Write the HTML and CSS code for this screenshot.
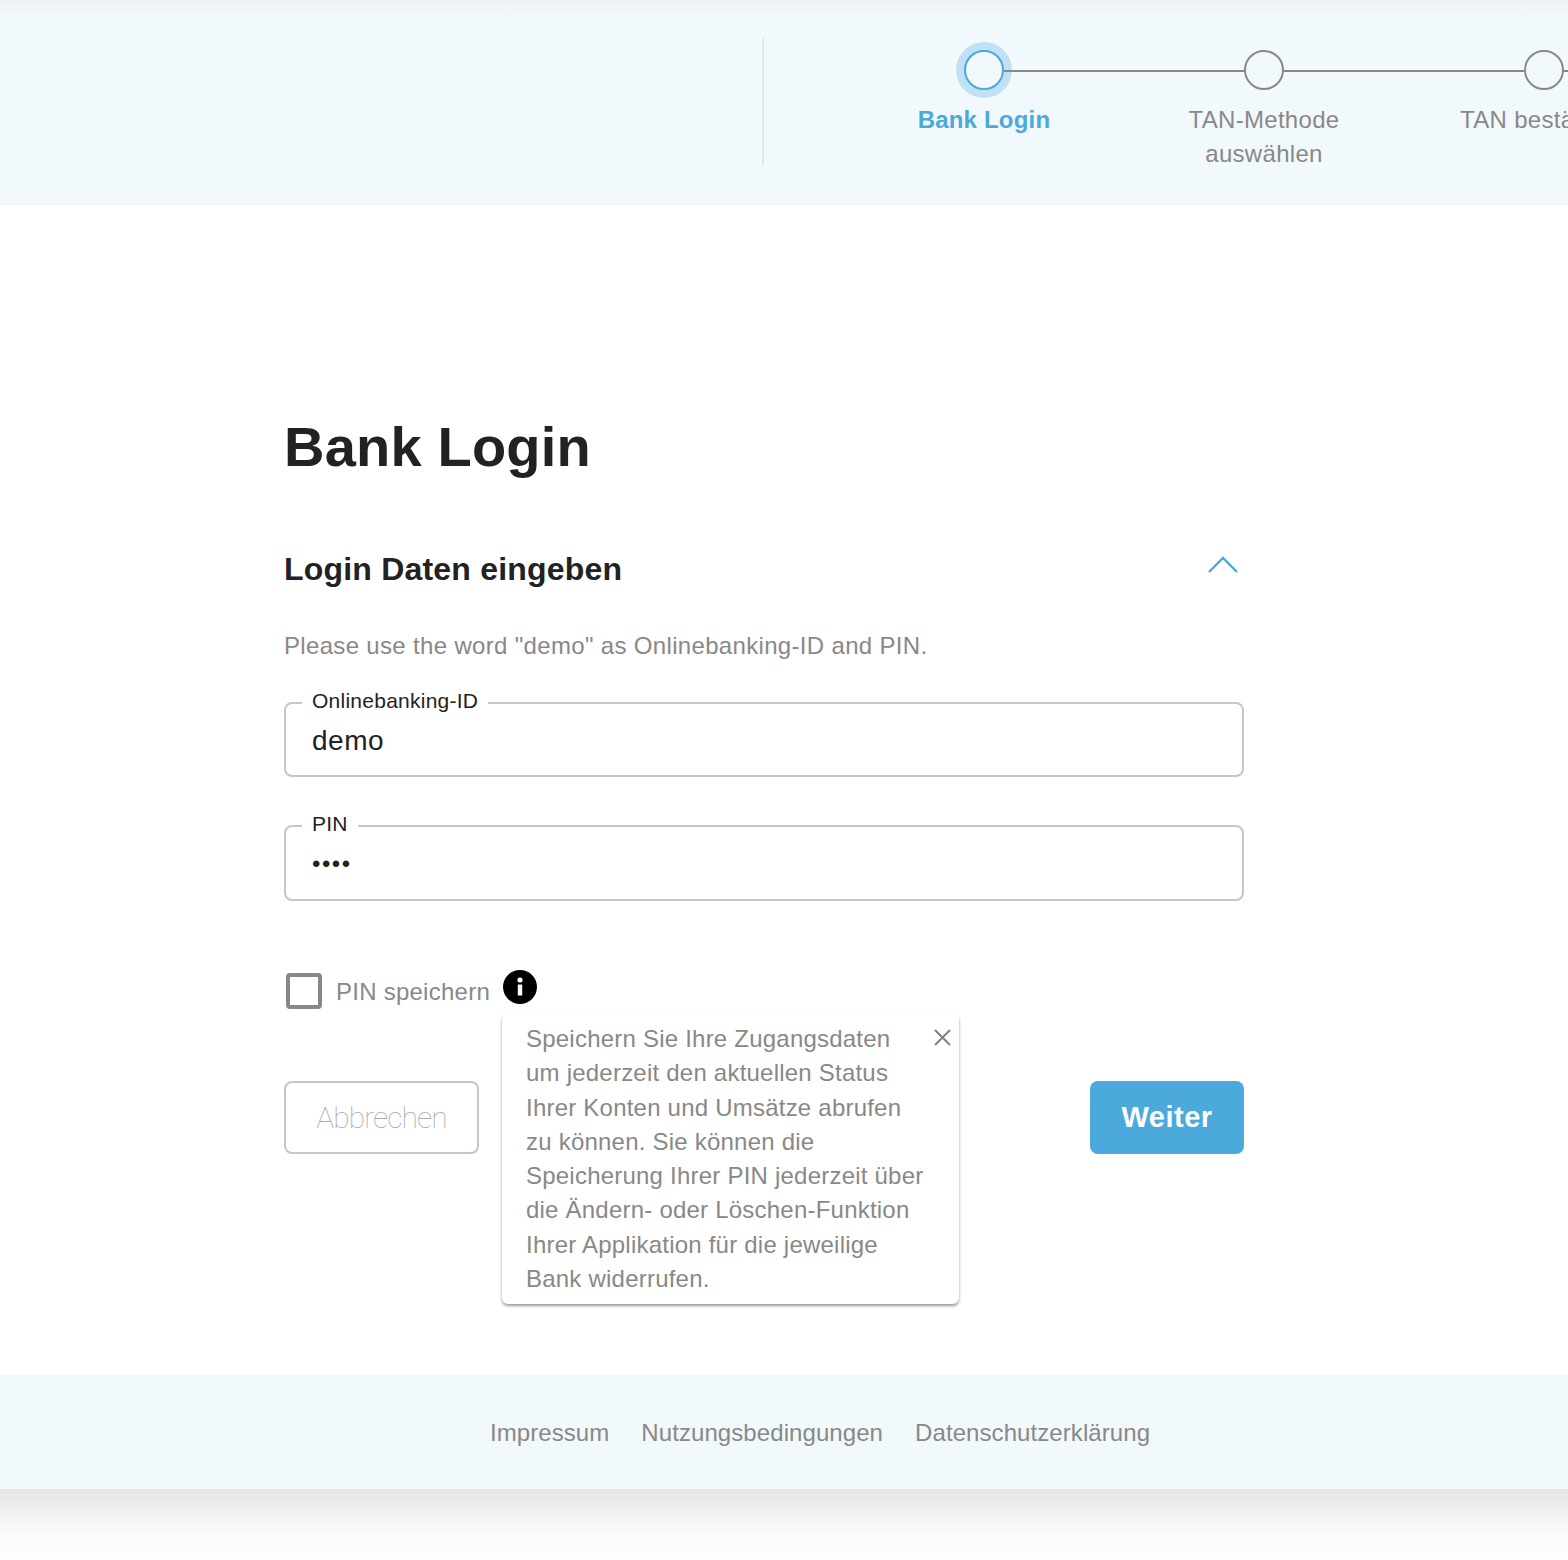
FILE: index.html
```html
<!DOCTYPE html>
<html lang="de">
<head>
  <meta charset="UTF-8">
  <meta name="viewport" content="width=device-width, initial-scale=1.0">
  <title>Bank Login</title>
  <link rel="stylesheet" href="styles.css">
</head>
<body>
  <header class="topbar">
    <div class="topbar-left"></div>
    <ol class="stepper">
      <li class="step step-active"><span class="step-dot"></span><span class="step-label">Bank Login</span></li>
      <li class="step"><span class="step-dot"></span><span class="step-label">TAN-Methode auswählen</span></li>
      <li class="step"><span class="step-dot"></span><span class="step-label">TAN bestätigen</span></li>
    </ol>
  </header>

  <main class="content">
    <h1>Bank Login</h1>
    <div class="section-head">
      <h2>Login Daten eingeben</h2>
      <svg class="chevron" width="30" height="17" viewBox="0 0 30 17" fill="none" stroke="#4ba9dc" stroke-width="2.4"><path d="M1 16 L15 2 L29 16"/></svg>
    </div>
    <p class="hint">Please use the word "demo" as Onlinebanking-ID and PIN.</p>

    <form>
      <fieldset class="field">
        <legend>Onlinebanking-ID</legend>
        <input type="text" value="demo">
      </fieldset>
      <fieldset class="field field-pin">
        <legend>PIN</legend>
        <input type="password" value="demo">
      </fieldset>

      <div class="save-row">
        <span class="checkbox"></span>
        <span class="save-label">PIN speichern</span>
        <svg class="info" width="34" height="34" viewBox="0 0 34 34"><circle cx="17" cy="17" r="17" fill="#000"/><rect x="14.8" y="14.5" width="4.4" height="11" fill="#fff"/><circle cx="17" cy="10" r="2.6" fill="#fff"/></svg>
        <div class="tooltip">
          <p>Speichern Sie Ihre Zugangsdaten um jederzeit den aktuellen Status Ihrer Konten und Umsätze abrufen zu können. Sie können die Speicherung Ihrer PIN jederzeit über die Ändern- oder Löschen-Funktion Ihrer Applikation für die jeweilige Bank widerrufen.</p>
          <svg class="tooltip-close" width="17" height="17" viewBox="0 0 17 17" stroke="#808080" stroke-width="2"><path d="M1 1 L16 16 M16 1 L1 16"/></svg>
        </div>
      </div>

      <div class="actions">
        <button type="button" class="btn-cancel">Abbrechen</button>
        <button type="submit" class="btn-next">Weiter</button>
      </div>
    </form>
  </main>

  <footer class="footer">
    <a href="#">Impressum</a>
    <a href="#">Nutzungsbedingungen</a>
    <a href="#">Datenschutzerklärung</a>
  </footer>
  <div class="bottom-shade"></div>
</body>
</html>
```

FILE: styles.css
```css
* { box-sizing: border-box; }
html, body {
  overflow-x: hidden;
}
body {
  margin: 0;
  font-family: 'Liberation Sans', Arial, sans-serif;
  background: #fff;
  color: #222;
}
.topbar {
  height: 205px;
  display: flex;
  overflow: hidden;
  padding-top: 38px;
  background: linear-gradient(#eef1f3 0, #eef3f6 3px, #f2f9fd 17px);
}
.topbar-left {
  flex: none;
  width: 764px;
  height: 128px;
  border-right: 2px solid #e3e8ec;
}
.stepper {
  flex: none;
  display: flex;
  list-style: none;
  margin: 0;
  padding: 12px 0 0 80px;
}
.step {
  position: relative;
  width: 280px;
  display: flex;
  flex-direction: column;
  align-items: center;
  color: #888;
}
.step::after {
  content: '';
  position: absolute;
  top: 20px;
  left: 160px;
  width: 240px;
  height: 2px;
  background: #888;
}
.step-dot {
  width: 40px;
  height: 40px;
  border: 2px solid #888;
  border-radius: 50%;
  background: #f2f9fd;
}
.step-label {
  width: 200px;
  margin-top: 13px;
  font-size: 24px;
  line-height: 34px;
  letter-spacing: 0.3px;
  text-align: center;
}
.step:nth-child(3) .step-label {
  white-space: nowrap;
}
.step-active { color: #4ba9dc; }
.step-active .step-label { font-weight: 700; letter-spacing: 0.2px; }
.step-active .step-dot {
  border-color: #4ba9dc;
  box-shadow: 0 0 0 8px #c0e0f3;
}

.content {
  height: 1170px;
  width: 960px;
  margin-left: 284px;
  padding-top: 210px;
}
h1 {
  margin: 0;
  font-size: 56px;
  line-height: 64px;
  font-weight: 700;
  letter-spacing: 0.2px;
}
.section-head {
  display: flex;
  justify-content: space-between;
  align-items: center;
  margin-top: 70px;
  padding-right: 6px;
}
h2 {
  margin: 0;
  font-size: 32px;
  line-height: 40px;
  font-weight: 700;
  letter-spacing: 0.2px;
}
.chevron { margin-top: -10px; }
.hint {
  margin: 40px 0 0;
  font-size: 24px;
  line-height: 34px;
  letter-spacing: 0.33px;
  color: #888;
}
.field {
  margin: 25px 0 0;
  padding: 0 26px;
  height: 89px;
  border: 2px solid #c6c6c6;
  border-radius: 8px;
}
.field legend {
  padding: 0 10px 4px;
  margin-left: -10px;
  font-size: 21px;
  line-height: 26px;
  letter-spacing: 0.25px;
  color: #222;
}
.field input {
  display: block;
  width: 100%;
  border: 0;
  padding: 0;
  margin-top: 3px;
  height: 40px;
  background: none;
  outline: none;
  font-family: inherit;
  font-size: 28px;
  letter-spacing: 0.5px;
  color: #222;
}
.field-pin { margin-top: 34px; height: 90px; }
.field-pin input { font-size: 24px; letter-spacing: 1.5px; }
.save-row {
  position: relative;
  display: flex;
  align-items: flex-start;
  margin-top: 69px;
  padding-left: 2px;
}
.checkbox {
  width: 36px;
  height: 36px;
  margin-top: 3px;
  border: 4px solid #888;
  border-radius: 4px;
}
.save-label {
  margin: 5px 0 0 14px;
  font-size: 24px;
  line-height: 34px;
  letter-spacing: 0.25px;
  color: #888;
}
.info { margin-left: 13px; }
.tooltip {
  position: absolute;
  top: 43px;
  left: 218px;
  width: 457px;
  height: 291px;
  padding: 9px 33px 9px 24px;
  background: #fff;
  border-radius: 6px;
  box-shadow: 0 2px 3px rgba(0, 0, 0, 0.4);
}
.tooltip p {
  margin: 0;
  font-size: 24px;
  line-height: 34.3px;
  letter-spacing: 0.22px;
  color: #888;
}
.tooltip-close {
  position: absolute;
  top: 16px;
  right: 8px;
}
.actions {
  display: flex;
  justify-content: space-between;
  margin-top: 72px;
}
.actions button {
  height: 73px;
  border-radius: 8px;
  cursor: pointer;
}
.btn-cancel {
  width: 195px;
  background: #fff;
  border: 2px solid #c6c6c6;
  font-family: Roboto, sans-serif;
  font-weight: 100;
  font-size: 30px;
  letter-spacing: -0.9px;
  color: #aaa;
}
.btn-next {
  width: 154px;
  background: #4ba9dc;
  border: none;
  font-family: inherit;
  font-size: 29px;
  font-weight: 700;
  letter-spacing: 0.5px;
  color: #fff;
}

.footer {
  height: 114px;
  display: flex;
  justify-content: center;
  align-items: center;
  gap: 32px;
  padding-left: 72px;
  background: #f2f9fd;
  border-top: 2px solid #f4f6f9;
}
.footer a {
  font-size: 24px;
  letter-spacing: 0.08px;
  color: #888;
  text-decoration: none;
}
.bottom-shade {
  height: 71px;
  background: linear-gradient(#e5e5e5, #fafafa 60%, #fefefe);
}
```
